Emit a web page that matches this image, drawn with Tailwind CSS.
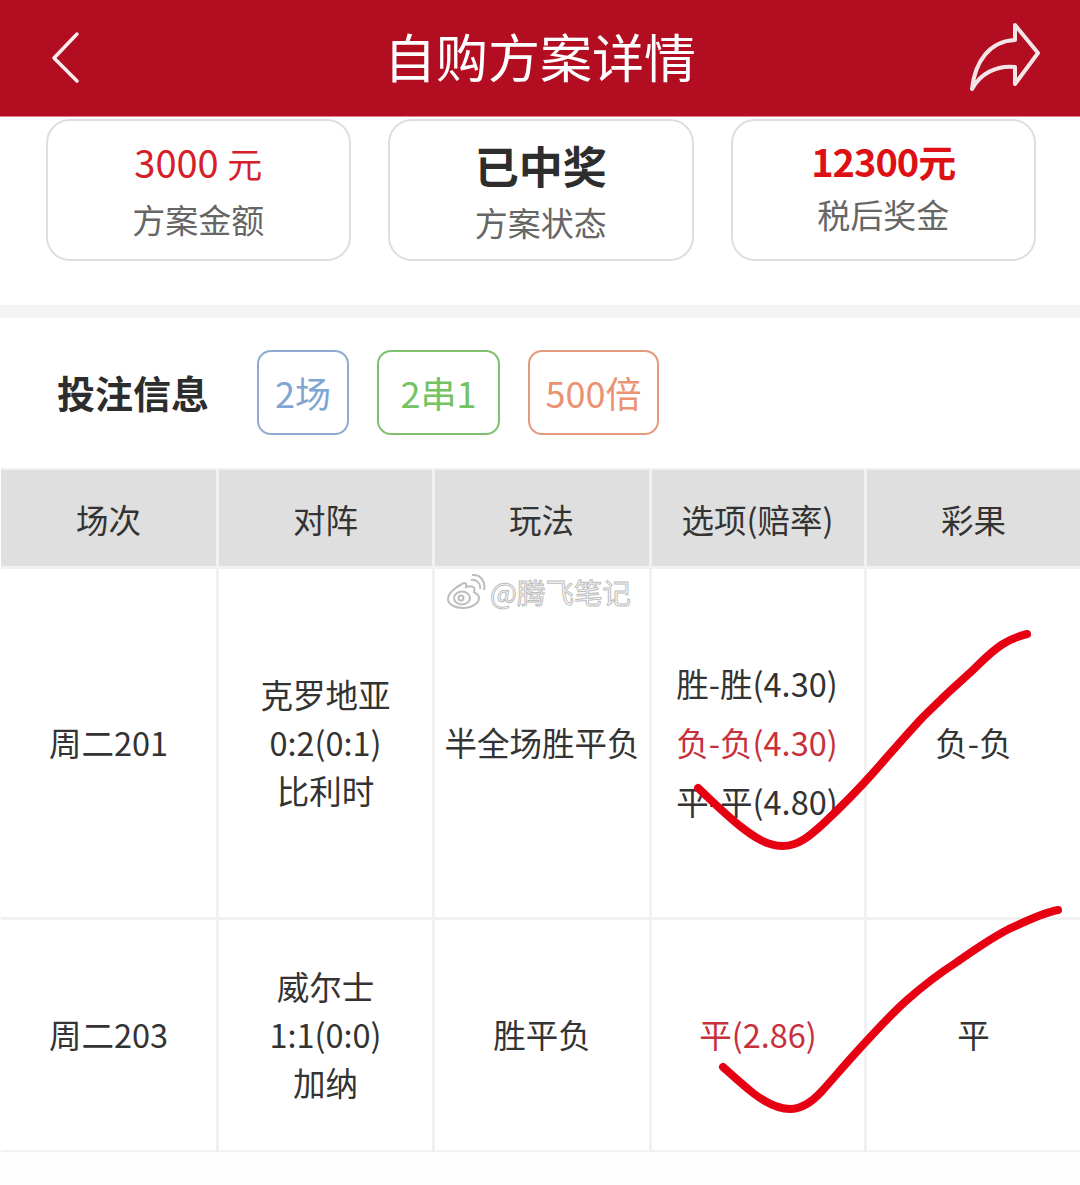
<!DOCTYPE html>
<html lang="zh-CN">
  <head>
    <meta charset="UTF-8" />
    <title>自购方案详情</title>
    <script src="https://cdn.jsdelivr.net/npm/@tailwindcss/browser@4"></script>
  </head>
  <body class="bg-white font-['Noto_Sans_CJK_SC','Noto_Sans',sans-serif] text-[#333]">
    <div class="relative w-[1080px] h-[1185px] overflow-hidden bg-[#fdfdfd]">

      <!-- Header -->
      <header class="relative h-[117px] bg-[#b20d21] border-b border-[#d9808c] flex items-center justify-center text-white">
        <svg class="absolute left-[48px] top-[28px]" width="36" height="60" viewBox="0 0 36 60" fill="none" stroke="#fbeff0" stroke-width="3.5" stroke-linecap="round" stroke-linejoin="round">
          <path d="M29 6 L6 30 L29 53" />
        </svg>
        <h1 class="text-[52px] leading-none font-normal pb-[5px]">自购方案详情</h1>
        <svg class="absolute left-[968px] top-[20px]" width="76" height="72" viewBox="0 0 76 72" fill="none" stroke="#f4e6e8" stroke-width="4" stroke-linejoin="round">
          <path d="M47 5 L70 33 L47 64 L47 47 C28 45 12 54 4 69 C7 41 22 21 47 20 Z" />
        </svg>
      </header>

      <!-- Summary cards -->
      <section class="flex gap-[37px] pl-[45.5px] pt-[2px] h-[188px] bg-white">
        <div class="w-[305.5px] shrink-0 h-[142px] rounded-[24px] border-2 border-[#dedede] flex flex-col items-center pt-[16px]">
          <div class="text-[38px] leading-[50px] text-[#d5202a]">3000 <span class="text-[35px]">元</span></div>
          <div class="text-[33px] leading-[46px] mt-[8px] text-[#666]">方案金额</div>
        </div>
        <div class="w-[305.5px] shrink-0 h-[142px] rounded-[24px] border-2 border-[#dedede] flex flex-col items-center pt-[17px]">
          <div class="text-[44px] leading-[54px] font-bold text-[#2d2d2d]">已中奖</div>
          <div class="text-[33px] leading-[46px] mt-[7px] text-[#666]">方案状态</div>
        </div>
        <div class="w-[305.5px] shrink-0 h-[142px] rounded-[24px] border-2 border-[#dedede] flex flex-col items-center pt-[15px]">
          <div class="text-[38px] leading-[50px] font-bold text-[#dd1114] tracking-[-1px]">12300元</div>
          <div class="text-[33px] leading-[46px] mt-[5px] text-[#666]">税后奖金</div>
        </div>
      </section>

      <div class="h-[13px] bg-[#f4f4f4]"></div>

      <!-- Bet info -->
      <section class="flex items-center h-[150px] pl-[57px] pb-[2px] bg-white">
        <h2 class="w-[200px] text-[38px] leading-none font-bold text-[#2d2d2d]">投注信息</h2>
        <div class="w-[92px] h-[85px] rounded-[14px] border-2 border-[#8fabd0] flex items-center justify-center text-[36px] text-[#7fa5d3]">2场</div>
        <div class="ml-[28px] w-[123px] h-[85px] rounded-[14px] border-2 border-[#7fc06f] flex items-center justify-center text-[36px] text-[#74c262]">2串1</div>
        <div class="ml-[28px] w-[131px] h-[85px] rounded-[14px] border-2 border-[#e69a7c] flex items-center justify-center text-[36px] text-[#ea9271]">500倍</div>
      </section>

      <!-- Table -->
      <section class="grid grid-cols-[215px_213px_214px_212px_213px] grid-rows-[96px_348px_230px] gap-[3px] w-fit ml-[1px] py-[2px] bg-[#f1f1f1] text-[32.5px] text-center">
        <div class="bg-[#dfdfdf] flex items-center justify-center pt-[2px]">场次</div>
        <div class="bg-[#dfdfdf] flex items-center justify-center pt-[2px]">对阵</div>
        <div class="bg-[#dfdfdf] flex items-center justify-center pt-[2px] pr-[1px]">玩法</div>
        <div class="bg-[#dfdfdf] flex items-center justify-center pt-[2px] pr-[1px]">选项(赔率)</div>
        <div class="bg-[#dfdfdf] flex items-center justify-center pt-[2px]">彩果</div>

        <div class="bg-white flex items-center justify-center pb-[2px]">周二201</div>
        <div class="bg-white flex flex-col items-center justify-center leading-[48px] pb-[2px]">
          <span>克罗地亚</span><span>0:2(0:1)</span><span>比利时</span>
        </div>
        <div class="bg-white flex items-center justify-center pb-[2px]">半全场胜平负</div>
        <div class="bg-white flex flex-col items-center justify-center leading-[59px] pb-[3px] pr-[2px]">
          <span>胜-胜(4.30)</span><span class="text-[#c8303c]">负-负(4.30)</span><span>平-平(4.80)</span>
        </div>
        <div class="bg-white flex items-center justify-center pb-[2px]">负-负</div>

        <div class="bg-white flex items-center justify-center pb-[2px]">周二203</div>
        <div class="bg-white flex flex-col items-center justify-center leading-[48px] pb-[2px]">
          <span>威尔士</span><span>1:1(0:0)</span><span>加纳</span>
        </div>
        <div class="bg-white flex items-center justify-center pb-[2px]">胜平负</div>
        <div class="bg-white flex items-center justify-center pb-[2px] text-[#c8303c]">平(2.86)</div>
        <div class="bg-white flex items-center justify-center pb-[2px]">平</div>
      </section>

      <!-- Watermark -->
      <div class="absolute left-[446px] top-[574px] flex items-center gap-[4px]">
        <svg width="40" height="36" viewBox="0 0 40 36" fill="none" stroke="#bdbdbd" stroke-width="2">
          <path d="M16 10 C8 14 2 20 2 25 C2 31 10 34 17 34 C26 34 33 29 33 24 C33 20 29 19 28 18 C30 13 26 11 20 13 C21 9 19 8 16 10 Z" />
          <ellipse cx="16" cy="24" rx="8" ry="6.5" />
          <circle cx="15" cy="24" r="2.5" />
          <path d="M25 6 C30 5 35 9 34 15 M26 1 C34 0 40 7 38 16" />
        </svg>
        <span class="text-[28.5px] leading-none text-white [-webkit-text-stroke:1px_#bdbdbd]">@腾飞笔记</span>
      </div>

      <!-- Hand-drawn check marks -->
      <svg class="absolute left-0 top-0 pointer-events-none" width="1080" height="1185" viewBox="0 0 1080 1185" fill="none" stroke="#e60012" stroke-width="8" stroke-linecap="round" stroke-linejoin="round">
        <path d="M698 788 C712 801 726 815 740 826 C755 838 768 846 783 846 C798 846 810 836 824 823 C842 806 857 791 873 773 C890 754 906 735 923 717 C940 700 956 685 973 670 C984 659 993 650 1003 644 C1011 639 1019 636 1027 634" />
        <path d="M723 1067 C733 1076 743 1085 753 1093 C766 1103 778 1109 790 1109 C803 1109 813 1101 822 1091 C832 1080 842 1068 852 1057 C870 1037 888 1017 907 1000 C924 985 940 973 957 962 C974 950 990 939 1007 930 C1024 922 1042 913 1058 910" />
      </svg>
    </div>
  </body>
</html>
